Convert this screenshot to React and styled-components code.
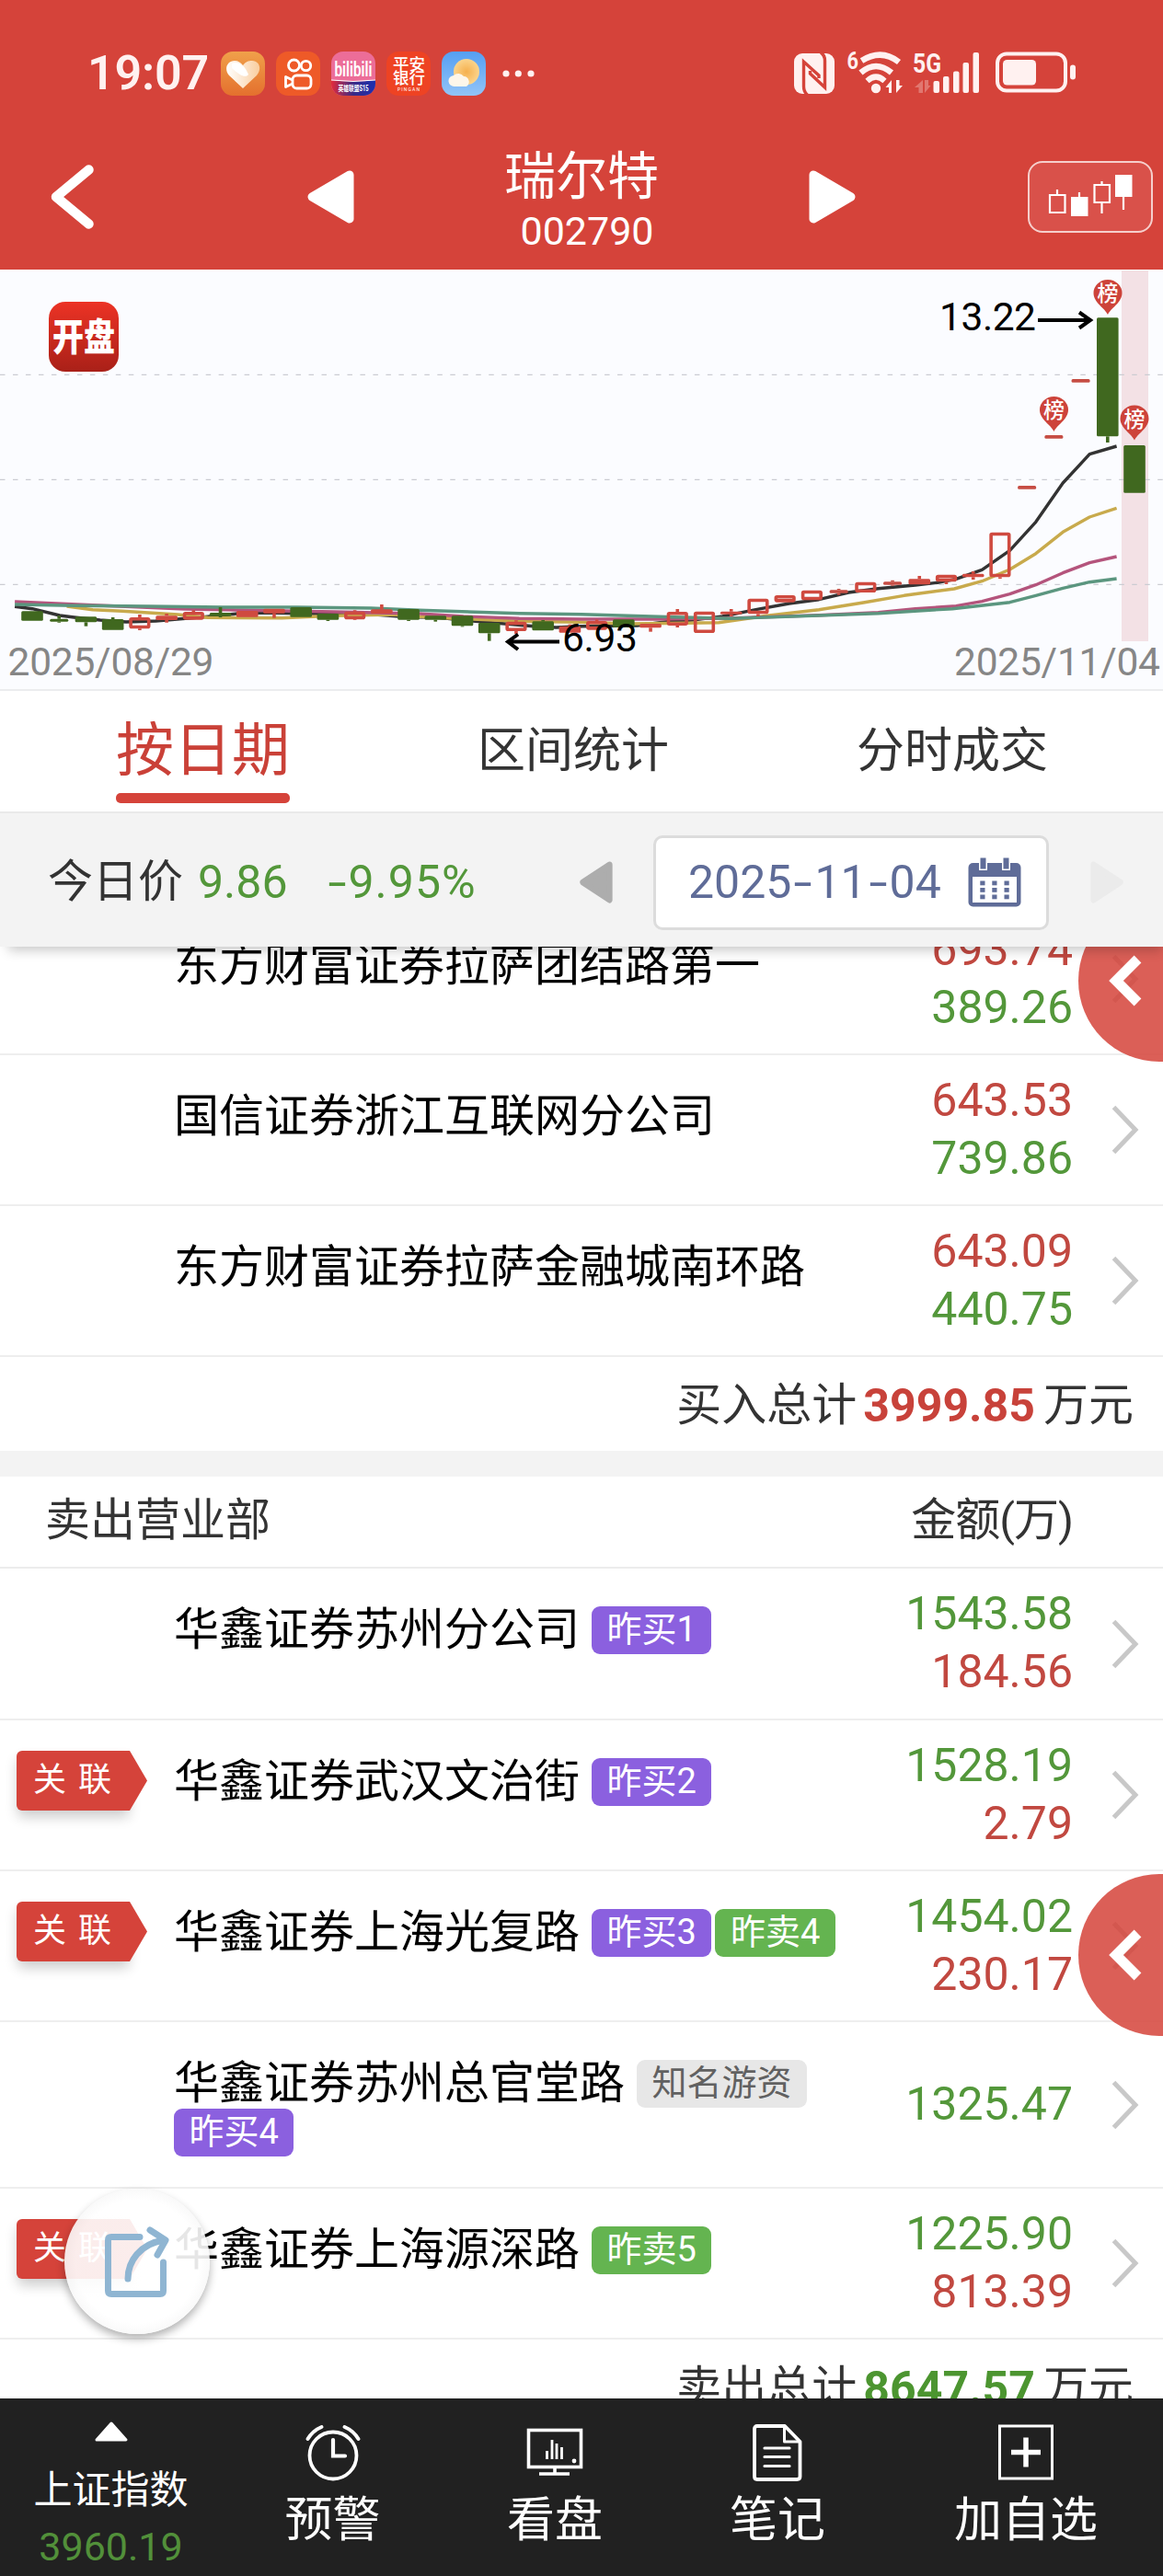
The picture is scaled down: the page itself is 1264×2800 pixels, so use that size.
import React from "react";
import styled, { createGlobalStyle, css } from "styled-components";

const Global = createGlobalStyle`
  * { box-sizing: border-box; }
  body {
    margin: 0;
    background: #fff;
    font-family: Roboto, "Noto Sans CJK SC", sans-serif;
    color: #333;
    -webkit-font-smoothing: antialiased;
  }
  svg { display: block; flex: none; overflow: visible; }
`;

const RED = "#d5433a";
const GREEN = "#53973a";

const Screen = styled.div`
  width: 1264px;
  height: 2800px;
  display: flex;
  flex-direction: column;
  overflow: hidden;
  background: #fff;
`;

/* ---------- header ---------- */

const Header = styled.header`
  height: 293px;
  flex: none;
  background: ${RED};
  color: #fff;
`;

const StatusBar = styled.div`
  height: 135px;
  padding: 56px 94px 0 95px;
  display: flex;
  align-items: flex-start;
  justify-content: space-between;
`;

const StatusGroup = styled.div`
  display: flex;
  align-items: center;
  height: 48px;
  gap: 12px;
`;

const Clock = styled.span`
  width: 133px;
  font-size: 52px;
  line-height: 62px;
  font-weight: 600;
  letter-spacing: -0.2px;
  white-space: nowrap;
  color: #fff1f0;
`;

const TitleBar = styled.div`
  height: 158px;
  display: grid;
  grid-template-columns: 334px 51px 494px 51px 1fr;
  align-items: center;
`;

const BackSlot = styled.div`
  padding-left: 55px;
`;

const ModeSlot = styled.div`
  display: flex;
  justify-content: flex-end;
  padding-right: 11px;
`;

const Title = styled.div`
  display: flex;
  flex-direction: column;
  align-items: center;
  padding-top: 14px;
`;

const StockName = styled.div`
  font-size: 56px;
  line-height: 60px;
`;

const StockCode = styled.div`
  font-size: 43px;
  line-height: 59px;
  padding-left: 12px;
`;

const ModeButton = styled.div`
  width: 136px;
  height: 78px;
  border: 2px solid #f6cfcc;
  border-radius: 16px;
  background: #d9514a;
  display: flex;
  align-items: center;
  justify-content: center;
`;

/* ---------- chart ---------- */

const ChartPanel = styled.section`
  height: 458px;
  flex: none;
  background: #fbfcff;
  border-bottom: 2px solid #ebecee;
  position: relative;
`;

const OpenBadge = styled.div`
  position: absolute;
  left: 53px;
  top: 35px;
  width: 76px;
  height: 76px;
  border-radius: 18px;
  background: linear-gradient(#ec3325, #a92018);
  color: #fff;
  font-size: 34px;
  font-weight: 900;
  line-height: 76px;
  text-align: center;
  white-space: nowrap;

  span {
    display: block;
    transform: scaleY(1.22);
  }
`;

/* ---------- tabs and date ---------- */

const Tabs = styled.nav`
  height: 133px;
  flex: none;
  padding: 0 125px 0 126px;
  display: flex;
  justify-content: space-between;
  border-bottom: 2px solid #e9e9e9;
`;

const Tab = styled.div`
  font-size: 52px;
  line-height: 132px;
  color: #333;

  ${(p) =>
    p.$active &&
    css`
      display: flex;
      flex-direction: column;
      height: 122px;
      font-size: 63px;
      line-height: 130px;
      color: #ca4138;

      &::after {
        content: "";
        height: 11px;
        margin-top: -19px;
        border-radius: 5px;
        background: ${RED};
      }
    `}
`;

const DateBar = styled.div`
  height: 145px;
  flex: none;
  background: #f3f3f3;
  display: grid;
  grid-template-columns: 630px 80px 430px 45px 1fr;
  align-items: center;
  padding-top: 5px;
  position: relative;
  z-index: 2;
  box-shadow: 4px 9px 12px -5px rgba(0, 0, 0, 0.22);
`;

const Today = styled.div`
  padding-left: 52px;
  display: flex;
  align-items: center;
  font-size: 50px;
  line-height: 60px;
  color: ${GREEN};
`;

const TodayLabel = styled.span`
  width: 163px;
  font-size: 49px;
  color: #333;
`;

const Change = styled.span`
  margin-left: 41px;
  letter-spacing: 1px;
`;

const Dash = styled.span`
  display: inline-block;
  width: 25px;
  letter-spacing: 0;
  text-align: center;
  transform: scaleX(1.45);
`;

const DateBox = styled.div`
  width: 430px;
  height: 103px;
  border: 3px solid #dcdcdc;
  border-radius: 10px;
  background: #fff;
  display: flex;
  align-items: center;
  justify-content: space-between;
  padding: 0 27px 0 35px;
  font-size: 50px;
  line-height: 60px;
  color: #5f6c98;
  white-space: nowrap;
`;

/* ---------- lists ---------- */

const Lists = styled.main`
  height: 1578px;
  flex: none;
  overflow: hidden;
  position: relative;
`;

const Scrolled = styled.div`
  margin-top: -46px;
`;

const Row = styled.div`
  height: ${(p) => p.$h}px;
  border-bottom: 2px solid #eeeeee;
  display: grid;
  grid-template-columns: 189px 1fr 216px 78px;
`;

const LinkSlot = styled.div`
  padding: 33px 0 0 18px;
`;

const LinkTag = styled.div`
  position: relative;
  width: 123px;
  height: 65px;
  border-radius: 6px 0 0 6px;
  background: ${RED};
  color: #fff;
  font-size: 36px;
  line-height: 65px;
  letter-spacing: 13px;
  padding-left: 18px;
  white-space: nowrap;
  box-shadow: 0 8px 14px -1px rgba(0, 0, 0, 0.2);

  &::after {
    content: "";
    position: absolute;
    left: 122px;
    top: 0;
    width: 20px;
    height: 65px;
    background: ${RED};
    clip-path: polygon(0 0, 5% 0, 100% 50%, 5% 100%, 0 100%);
  }
`;

const Branch = styled.div`
  padding-top: 40px;
  display: flex;
  flex-wrap: wrap;
  align-content: flex-start;
`;

const BranchName = styled.span`
  height: 53px;
  line-height: 53px;
  font-size: 49px;
  color: #000;
  margin-right: 13px;
`;

const tones = {
  buy: css`
    background: #8b60df;
    color: #fff;
  `,
  sell: css`
    background: #64b450;
    color: #fff;
  `,
  fame: css`
    background: #e7e7e7;
    color: #616161;
  `,
};

const Tag = styled.span`
  height: 52px;
  margin: 1px 4px 0 0;
  padding: 0 16.500px;
  border-radius: 9px;
  font-size: 38px;
  line-height: 50px;
  ${(p) => tones[p.$tone]}
`;

const Amounts = styled.div`
  display: flex;
  flex-direction: column;
  justify-content: center;
  padding-bottom: 1px;
  text-align: right;
  font-size: 50px;
  line-height: 63px;
`;

const Amount = styled.span`
  padding-right: 20px;
  color: ${(p) => (p.$tone === "red" ? "#c14840" : GREEN)};
`;

const ArrowSlot = styled.div`
  display: flex;
  align-items: center;
  padding-left: 22px;
`;

const TotalRow = styled.div`
  height: 102px;
  padding: 4px 32px 0 0;
  display: flex;
  justify-content: flex-end;
  align-items: center;
  font-size: 49px;
  line-height: 60px;
`;

const TotalValue = styled.b`
  font-size: 50px;
  margin: 0 9px 0 7px;
  color: ${(p) => (p.$tone === "red" ? "#c8423a" : "#4c9530")};
`;

const Band = styled.div`
  height: 28px;
  background: #f3f3f3;
`;

const SectionHead = styled.div`
  height: 100px;
  border-bottom: 2px solid #ececec;
  padding: 0 98px 2px 49px;
  display: flex;
  justify-content: space-between;
  align-items: center;
  font-size: 49px;
  line-height: 60px;
`;

const AmountHead = styled.span`
  letter-spacing: -1px;
`;

const Handle = styled.div`
  position: absolute;
  right: -84px;
  top: ${(p) => p.$top}px;
  width: 176px;
  height: 176px;
  border-radius: 50%;
  background: rgba(213, 67, 58, 0.85);
  display: flex;
  align-items: center;
  padding-left: 32px;
`;

const ShareButton = styled.div`
  position: absolute;
  left: 70px;
  top: 1350px;
  width: 158px;
  height: 158px;
  border-radius: 50%;
  background: radial-gradient(rgba(255, 255, 255, 0.9) 60%, rgba(249, 249, 249, 0.9) 70%);
  box-shadow: 0 5px 10px rgba(0, 0, 0, 0.3);
  padding: 41px 0 0 41px;
`;

/* ---------- bottom bar ---------- */

const BottomBar = styled.footer`
  height: 193px;
  flex: none;
  background: #212121;
  display: grid;
  grid-template-columns: 241px 241px 242px 242px 298px;
  color: #fff;
`;

const NavItem = styled.div`
  display: flex;
  flex-direction: column;
  align-items: center;
  padding-top: 28px;
  font-size: 52px;
`;

const NavLabel = styled.span`
  line-height: 60px;
  margin-top: 13px;
`;

const IndexItem = styled(NavItem)`
  padding-top: 25px;
  font-size: 42px;
`;

const IndexName = styled.span`
  line-height: 60px;
  margin-top: 23px;
`;

const IndexValue = styled.span`
  font-size: 43px;
  line-height: 60px;
  margin-top: 1px;
  color: #52903a;
`;

/* ---------- icons ---------- */

const HeartApp = () => (
  <svg width="48" height="48" viewBox="0 0 48 48">
    <defs>
      <linearGradient id="hb" x2="0" y2="1">
        <stop stopColor="#f0a04a" />
        <stop offset="1" stopColor="#e4702e" />
      </linearGradient>
      <linearGradient id="hf" x1="0" x2="1">
        <stop stopColor="#fff" />
        <stop offset="1" stopColor="#f9cd9e" />
      </linearGradient>
    </defs>
    <rect width="48" height="48" rx="13" fill="url(#hb)" />
    <path d="M24 40 L9 26 C3 19 7 10 15 10 C19 10 22 12 24 15 C27 11 30 10 34 10 C42 10 45 19 39 26 Z" fill="url(#hf)" />
    <path d="M12 13 C20 9 27 17 30 25 C26 30 19 24 12 18 Z" fill="#fff" />
  </svg>
);

const KuaiApp = () => (
  <svg width="48" height="48" viewBox="0 0 48 48">
    <rect width="48" height="48" rx="13" fill="#ee5a28" />
    <g fill="none" stroke="#fff" strokeWidth="2.800">
      <circle cx="19.500" cy="15" r="6" />
      <circle cx="32.500" cy="15.500" r="5.200" />
      <rect x="18" y="26" width="20" height="14" rx="4.500" />
      <path d="M18 31 L10.500 27.500 V38.500 L18 35" strokeLinejoin="round" />
    </g>
  </svg>
);

const BiliApp = () => (
  <svg width="48" height="48" viewBox="0 0 48 48">
    <defs>
      <clipPath id="bc">
        <rect width="48" height="48" rx="13" />
      </clipPath>
      <linearGradient id="bl">
        <stop stopColor="#e32a3a" />
        <stop offset="0.5" stopColor="#3a2a86" />
        <stop offset="1" stopColor="#1c2fb0" />
      </linearGradient>
    </defs>
    <g clipPath="url(#bc)">
      <rect width="48" height="48" fill="#ec6d98" />
      <path d="M0 31 Q24 34 48 31 V48 H0 Z" fill="url(#bl)" />
      <path d="M0 31 Q24 34 48 31" stroke="#fff" strokeWidth="1" fill="none" />
    </g>
    <text x="24" y="27" fontSize="22" fontWeight="600" fill="#fff" textAnchor="middle" textLength="41" lengthAdjust="spacingAndGlyphs">
      bilibili
    </text>
    <text x="24" y="42.500" fontSize="8.500" fontWeight="700" fill="#fff" textAnchor="middle" textLength="33" lengthAdjust="spacingAndGlyphs">
      英雄联盟S15
    </text>
  </svg>
);

const BankApp = () => (
  <svg width="48" height="48" viewBox="0 0 48 48">
    <rect width="48" height="48" rx="13" fill="#ee4323" />
    <g fill="#fff" textAnchor="middle">
      <text x="24.500" y="20" fontSize="17.500" fontWeight="500">平安</text>
      <text x="24.500" y="35" fontSize="17.500" fontWeight="500">银行</text>
      <text x="24" y="42.500" fontSize="5" textLength="24">PINGAN</text>
    </g>
  </svg>
);

const WeatherApp = () => (
  <svg width="48" height="48" viewBox="0 0 48 48">
    <defs>
      <linearGradient id="wb" x2="0" y2="1">
        <stop stopColor="#559ff3" />
        <stop offset="1" stopColor="#92c4f7" />
      </linearGradient>
      <radialGradient id="ws">
        <stop stopColor="#f5b04e" />
        <stop offset="1" stopColor="#fbd48c" />
      </radialGradient>
    </defs>
    <rect width="48" height="48" rx="13" fill="url(#wb)" />
    <circle cx="27" cy="22" r="14" fill="url(#ws)" />
    <path d="M14 38 a6 6 0 0 1 -1 -12 a7.500 7.500 0 0 1 11 1 a6 6 0 0 1 3 11 Z" fill="#fdf6ea" />
  </svg>
);

const DotsSlot = styled.span`
  padding-left: 6px;
`;

const MoreDots = () => (
  <svg width="36" height="10" viewBox="0 0 36 10">
    <g fill="#fff1f0">
      <circle cx="4" cy="5" r="3.600" />
      <circle cx="17.300" cy="5" r="3.600" />
      <circle cx="31" cy="5" r="3.600" />
    </g>
  </svg>
);

const StatusIcons = () => (
  <svg width="308" height="48" viewBox="863 56 308 48">
    <rect x="864" y="58" width="44" height="44" rx="9" fill="#fff1f0" />
    <g fill="none" stroke={RED} strokeWidth="3.400">
      <path d="M878.500 103 Q874.500 100 874.500 94 V67 L891 82 V85" />
      <path d="M893 57 Q897.500 60 897.500 66 V95 L881.500 80 V77" />
    </g>
    <g fill="#fff1f0">
      <text x="921.500" y="74.500" fontSize="26" fontWeight="700" textLength="12.500" lengthAdjust="spacingAndGlyphs">6</text>
      <text x="993" y="78.500" fontSize="30" fontWeight="700" textLength="31" lengthAdjust="spacingAndGlyphs">5G</text>
      <circle cx="953" cy="96" r="5.200" />
      <rect x="1015.500" y="88" width="6.500" height="13" rx="2" />
      <rect x="1026" y="83" width="6.500" height="18" rx="2" />
      <rect x="1037" y="77.500" width="6.500" height="23.500" rx="2" />
      <rect x="1047.500" y="68" width="6.500" height="33" rx="2" />
      <rect x="1058.500" y="57" width="6.500" height="44" rx="2" />
      <path d="M970 101 V87 L963.500 95 H967 V101 Z" />
      <path d="M975 87 V101 L982 93 H978.500 V87 Z" />
      <path d="M1004 101 V87 L995 95 H999.500 V101 Z" opacity="0.300" />
      <path d="M1006 87 V101 L1012.500 93 H1010 V87 Z" opacity="0.300" />
      <rect x="1091" y="65" width="36" height="27.500" rx="4.500" />
      <rect x="1164" y="70.500" width="6" height="16" rx="3" />
    </g>
    <g fill="none" stroke="#fff1f0">
      <path d="M937.500 66 Q959 52.500 978 67.500" strokeWidth="6.500" />
      <path d="M936.500 79 Q953 65 970 79" strokeWidth="6.500" />
      <path d="M943.500 88 Q953 79 962.500 88" strokeWidth="6" />
      <rect x="1085" y="58.500" width="74" height="40" rx="10" strokeWidth="4" />
    </g>
  </svg>
);

const BackIcon = () => (
  <svg width="50" height="72" viewBox="0 0 50 72">
    <path d="M42 6.500 L6.500 36 L42 65.500" transform="translate(-0.500 0)" fill="none" stroke="#fff" strokeWidth="10.500" strokeLinecap="round" strokeLinejoin="round" />
  </svg>
);

const PlayIcon = ({ w, h, color, flip }) => (
  <svg width={w} height={h} viewBox="0 0 51 58" preserveAspectRatio="none">
    <path
      d="M46 5 L5 29 L46 53 Z"
      transform={flip ? "translate(51 0) scale(-1 1)" : undefined}
      fill={color}
      stroke={color}
      strokeWidth="9"
      strokeLinejoin="round"
    />
  </svg>
);

const CandlesIcon = () => (
  <svg width="92" height="50" viewBox="1139 190 92 50">
    <g fill="none" stroke="#fff" strokeWidth="2.200">
      <path d="M1141 213 H1157.500 V232 H1141 Z M1149 212 V207" />
      <path d="M1173 216 V210" />
      <path d="M1189.500 202 H1206 V221 H1189.500 Z M1197.500 201 V198 M1197.500 222 V233" />
      <path d="M1221 214 V229" />
    </g>
    <rect x="1164" y="215" width="18.500" height="21" fill="#fff" />
    <rect x="1212" y="191" width="18.500" height="24" fill="#fff" />
  </svg>
);

const CalendarIcon = () => (
  <svg width="58" height="54" viewBox="0 0 58 54">
    <rect x="0.500" y="6" width="57" height="47.500" rx="5" fill="#5f6c98" />
    <rect x="5" y="21" width="48" height="28" fill="#fff" />
    <path d="M12 5.500 H21 V14 H12 Z M37 5.500 H46 V14 H37 Z" fill="#fff" />
    <path d="M13.500 0.500 H19.500 V12.500 H13.500 Z M38.500 0.500 H44.500 V12.500 H38.500 Z" fill="#5f6c98" />
    {[25.500, 33, 40.500].map((y) =>
      [13.300, 26.300, 39.500].map((x) => <rect key={`${x}-${y}`} x={x} y={y} width="5.200" height="4.800" fill="#5f6c98" />)
    )}
  </svg>
);

const ChevronIcon = () => (
  <svg width="30" height="54" viewBox="0 0 30 54">
    <path d="M2.500 2.500 L26 27 L2.500 51.500" fill="none" stroke="#c8c8c8" strokeWidth="5" />
  </svg>
);

const HandleIcon = () => (
  <svg width="38" height="56" viewBox="0 0 38 56">
    <path d="M32.500 4.500 L9 28 L32.500 51.500" fill="none" stroke="#fff" strokeWidth="11" />
  </svg>
);

const ShareIcon = () => (
  <svg width="74" height="78" viewBox="0 0 74 78">
    <g fill="none" stroke="#8fb5d2" strokeWidth="7" strokeLinecap="round" strokeLinejoin="round">
      <path d="M41 11.500 H10 Q6.500 11.500 6.500 15 V70 Q6.500 73.500 10 73.500 H63 Q66.500 73.500 66.500 70 V39" />
      <path d="M28 57 C28 38 41 19 67 15" />
      <path d="M52 4 L69 15 L60 31" />
    </g>
  </svg>
);

const AlarmIcon = () => (
  <svg width="60" height="62" viewBox="0 0 60 62">
    <g fill="none" stroke="#fff" strokeLinecap="round">
      <circle cx="30" cy="34" r="25.500" strokeWidth="3.800" />
      <path d="M30 17 V34.500 H43" strokeWidth="4.200" />
      <path d="M2.500 16 Q8 7 17.500 3 M42.500 3 Q52 7 57.500 16" strokeWidth="4" />
    </g>
  </svg>
);

const MonitorIcon = () => (
  <svg width="62" height="62" viewBox="0 0 62 62">
    <rect x="2.500" y="6.500" width="57" height="40" fill="none" stroke="#fff" strokeWidth="3.600" />
    <path d="M14 54 H47 M31 46 V54" stroke="#fff" strokeWidth="3.600" />
    <path d="M22.500 29 V38 M28 17 V38 M33 21 V38 M38.500 25 V38" stroke="#fff" strokeWidth="2.800" />
    <circle cx="52" cy="40" r="2.400" fill="#fff" />
  </svg>
);

const NoteIcon = () => (
  <svg width="56" height="62" viewBox="0 0 56 62">
    <g fill="none" stroke="#fff" strokeWidth="3.800" strokeLinejoin="round" strokeLinecap="round">
      <path d="M36 2 H6 Q3 2 3 5 V57 Q3 60 6 60 H49 Q52.500 60 52.500 57 V19 Z" />
      <path d="M35.500 3 V19 H51" strokeWidth="3" />
      <path d="M14 26 H41 M14 35.500 H41 M14 45.500 H41" strokeWidth="3.200" />
    </g>
  </svg>
);

const PlusIcon = () => (
  <svg width="62" height="62" viewBox="0 0 62 62">
    <rect x="2.500" y="2" width="57" height="57" fill="none" stroke="#fff" strokeWidth="3" />
    <path d="M15 30.500 H47 M31 14.500 V46.500" stroke="#fff" strokeWidth="5.500" />
  </svg>
);

/* ---------- candlestick chart ---------- */

const X = (u) => u / 2.481;
const Y = (v) => v / 3 - 3;
const STEP = 29.22;

// kind, body top, body bottom, wick top, wick bottom
const candles = [
  ["g", 1123, 1154], ["gt", 1148, 1157, 1138, 1160], ["g", 1141, 1159, 1141, 1172], ["g", 1149, 1184, 1143, 1184],
  ["h", 1143, 1180, 1134, 1185], ["r", 1138, 1152, 1131, 1160], ["h", 1125, 1151, 1120, 1151], ["g", 1128, 1139, 1110, 1143],
  ["r", 1122, 1142], ["r", 1115, 1130, 1115, 1145], ["g", 1110, 1142], ["g", 1131, 1151, 1131, 1155],
  ["h", 1124, 1150, 1120, 1152], ["r", 1117, 1131, 1101, 1131], ["g", 1116, 1151, 1116, 1155], ["g", 1138, 1151, 1138, 1157],
  ["g", 1138, 1171, 1138, 1174], ["g", 1161, 1195, 1161, 1220], ["h", 1157, 1188, 1153, 1197], ["g", 1156, 1186, 1152, 1186],
  ["r", 1172, 1193, 1166, 1193], ["h", 1155, 1184, 1150, 1184], ["g", 1150, 1175], ["r", 1164, 1177, 1164, 1190],
  ["h", 1125, 1170, 1116, 1176], ["h", 1124, 1194], ["r", 1124, 1133, 1116, 1140], ["h", 1082, 1132, 1082, 1140],
  ["h", 1071, 1094], ["h", 1055, 1087], ["rt", 1054, 1064, 1050, 1070], ["h", 1028, 1062],
  ["rt", 1027, 1037, 1022, 1040], ["r", 1018, 1036, 1008, 1036], ["h", 1004, 1027, 1004, 1035], ["r", 1001, 1012, 993, 1020],
  ["h", 866, 1012, 866, 1017], ["rt", 714, 725], ["rt", 549, 560], ["rt", 366, 377],
  ["g", 166, 553, 166, 573], ["g", 582, 737],
];

const averages = [
  ["#5b967f", "40,1101 200,1105 400,1107 600,1110 800,1110 1000,1113 1130,1120 1400,1130 1568,1133 1818,1142 1968,1147 2118,1141 2368,1130 2568,1115 2723,1094 2793,1072 2866,1048 2938,1028 3011,1017"],
  ["#b4547c", "40,1092 250,1103 500,1116 900,1125 1130,1131 1250,1140 1400,1147 1568,1149 1768,1149 1968,1146 2208,1136 2368,1127 2468,1115 2578,1106 2648,1091 2723,1067 2793,1037 2866,998 2938,965 3011,945"],
  ["#c8aa4c", "180,1107 250,1118 330,1123 480,1134 560,1144 760,1145 900,1138 1060,1134 1130,1141 1250,1148 1400,1156 1568,1159 1698,1164 1938,1160 2068,1138 2208,1118 2328,1095 2438,1072 2573,1050 2648,1025 2723,987 2793,935 2866,865 2938,816 3011,787"],
  ["#333", "40,1108 87,1115 161,1137 200,1143 270,1152 340,1158 420,1155 500,1147 560,1141 640,1131 720,1128 800,1130 880,1132 960,1128 1020,1135 1100,1142 1180,1143 1250,1153 1340,1162 1440,1172 1500,1176 1568,1172 1718,1170 1798,1157 1868,1152 1948,1140 2038,1118 2128,1098 2208,1085 2288,1062 2368,1049 2468,1038 2528,1030 2578,1018 2648,988 2723,925 2793,832 2866,705 2938,611 3011,585"],
];

const Candle = ({ index, data }) => {
  const [kind, top, bottom, high = top, low = bottom] = data;
  const x = 35 + index * STEP;
  const green = kind[0] === "g";
  const color = green ? "#40681f" : kind[1] === "t" ? "#c64d44" : "#cf4a40";
  const half = kind[1] === "t" ? 10 : 11.8;
  const y1 = Y(top);
  const y2 = Y(bottom);
  return (
    <g stroke={color} fill={color}>
      <path d={`M${x} ${Y(high)} V${y1} M${x} ${y2} V${Y(low)}`} strokeWidth="3.600" />
      {kind === "h" ? (
        <rect x={x - 9.8} y={y1 + 1.8} width="19.600" height={Math.max(y2 - y1 - 3.6, 2)} rx="1" fill="none" strokeWidth="3.600" />
      ) : (
        <rect x={x - half} y={y1} width={half * 2} height={y2 - y1} rx="1.500" stroke="none" />
      )}
    </g>
  );
};

const Pin = ({ x, y }) => (
  <g transform={`translate(${x} ${y})`}>
    <path d="M0 38 C-3 31 -15.500 25 -15.500 14.500 A15.500 14.500 0 0 1 15.500 14.500 C15.500 25 3 31 0 38 Z" fill="#cd433a" />
    <text x="0" y="23" fontSize="23" fontWeight="500" fill="#fff" textAnchor="middle">榜</text>
  </g>
);

const points = (list) =>
  list
    .split(" ")
    .map((pair) => {
      const [u, v] = pair.split(",").map(Number);
      return `${X(u).toFixed(1)},${Y(v).toFixed(1)}`;
    })
    .join(" ");

const KLine = () => (
  <svg width="1264" height="456" viewBox="0 0 1264 456">
    <rect x="1219" y="1" width="29" height="403" fill="#f3e1e5" />
    {[114.3, 228.3, 342.3].map((y) => (
      <path key={y} d={`M0 ${y} H1264`} stroke="#cbccd2" strokeWidth="1.200" strokeDasharray="5.500 8.480" />
    ))}
    {averages
      .slice()
      .reverse()
      .map(([color, list]) => (
        <polyline key={color} points={points(list)} fill="none" stroke={color} strokeWidth="3.400" strokeLinejoin="round" />
      ))}
    {candles.map((data, i) => (
      <Candle key={i} index={i} data={data} />
    ))}
    <Pin x={1204} y={11} />
    <Pin x={1145.5} y={138} />
    <Pin x={1233} y={147.5} />
    <g fill="#000" fontSize="42.500">
      <text x="1126" y="65.500" textAnchor="end" textLength="105">13.22</text>
      <text x="611" y="414.500" textLength="82">6.93</text>
    </g>
    <g fill="none" stroke="#000" strokeWidth="4">
      <path d="M1128 55 H1184 M1173 46.500 L1185 55 L1173 63.500" />
      <path d="M608 404.500 H553 M563 396.500 L552 404.500 L563 413" />
    </g>
    <g fill="#868686" fontSize="42.500">
      <text x="8.500" y="441" textLength="224">2025/08/29</text>
      <text x="1037" y="441" textLength="224">2025/11/04</text>
    </g>
  </svg>
);

/* ---------- data ---------- */

const buyers = [
  { name: "东方财富证券拉萨团结路第一", up: "693.74", down: "389.26", h: 164 },
  { name: "国信证券浙江互联网分公司", up: "643.53", down: "739.86", h: 164 },
  { name: "东方财富证券拉萨金融城南环路", up: "643.09", down: "440.75", h: 164 },
];

const sellers = [
  { name: "华鑫证券苏州分公司", tags: [["buy", "昨买1"]], down: "1543.58", up: "184.56", h: 165 },
  { name: "华鑫证券武汉文治街", tags: [["buy", "昨买2"]], down: "1528.19", up: "2.79", h: 164, linked: true },
  { name: "华鑫证券上海光复路", tags: [["buy", "昨买3"], ["sell", "昨卖4"]], down: "1454.02", up: "230.17", h: 164, linked: true },
  { name: "华鑫证券苏州总官堂路", tags: [["fame", "知名游资"], ["buy", "昨买4"]], down: "1325.47", h: 181 },
  { name: "华鑫证券上海源深路", tags: [["sell", "昨卖5"]], down: "1225.90", up: "813.39", h: 164, linked: true },
];

const BranchRow = ({ item, selling }) => {
  const up = item.up && (
    <Amount key="up" $tone="red">
      {item.up}
    </Amount>
  );
  const down = (
    <Amount key="down" $tone="green">
      {item.down}
    </Amount>
  );
  return (
    <Row $h={item.h}>
      <LinkSlot>{item.linked && <LinkTag>关联</LinkTag>}</LinkSlot>
      <Branch>
        <BranchName>{item.name}</BranchName>
        {(item.tags || []).map(([tone, label]) => (
          <Tag key={label} $tone={tone}>
            {label}
          </Tag>
        ))}
      </Branch>
      <Amounts>{selling ? [down, up] : [up, down]}</Amounts>
      <ArrowSlot>
        <ChevronIcon />
      </ArrowSlot>
    </Row>
  );
};

export default function App() {
  return (
    <Screen>
      <Global />
      <Header>
        <StatusBar>
          <StatusGroup>
            <Clock>19:07</Clock>
            <HeartApp />
            <KuaiApp />
            <BiliApp />
            <BankApp />
            <WeatherApp />
            <DotsSlot>
              <MoreDots />
            </DotsSlot>
          </StatusGroup>
          <StatusIcons />
        </StatusBar>
        <TitleBar>
          <BackSlot>
            <BackIcon />
          </BackSlot>
          <PlayIcon w={51} h={58} color="#fff" />
          <Title>
            <StockName>瑞尔特</StockName>
            <StockCode>002790</StockCode>
          </Title>
          <PlayIcon w={51} h={58} color="#fff" flip />
          <ModeSlot>
            <ModeButton>
              <CandlesIcon />
            </ModeButton>
          </ModeSlot>
        </TitleBar>
      </Header>

      <ChartPanel>
        <KLine />
        <OpenBadge>
          <span>开盘</span>
        </OpenBadge>
      </ChartPanel>

      <Tabs>
        <Tab $active>按日期</Tab>
        <Tab>区间统计</Tab>
        <Tab>分时成交</Tab>
      </Tabs>

      <DateBar>
        <Today>
          <TodayLabel>今日价</TodayLabel>
          <span>9.86</span>
          <Change>
            <Dash>-</Dash>9.95%
          </Change>
        </Today>
        <PlayIcon w={36} h={46} color="#adadad" />
        <DateBox>
          <span>
            2025<Dash>-</Dash>11<Dash>-</Dash>04
          </span>
          <CalendarIcon />
        </DateBox>
        <span />
        <PlayIcon w={36} h={46} color="#ebebeb" flip />
      </DateBar>

      <Lists>
        <Scrolled>
          {buyers.map((item) => (
            <BranchRow key={item.name} item={item} />
          ))}
          <TotalRow>
            买入总计<TotalValue $tone="red">3999.85</TotalValue>万元
          </TotalRow>
          <Band />
          <SectionHead>
            <span>卖出营业部</span>
            <AmountHead>金额(万)</AmountHead>
          </SectionHead>
          {sellers.map((item) => (
            <BranchRow key={item.name} item={item} selling />
          ))}
          <TotalRow>
            卖出总计<TotalValue $tone="green">8647.57</TotalValue>万元
          </TotalRow>
        </Scrolled>
        <Handle $top={-51}>
          <HandleIcon />
        </Handle>
        <Handle $top={1008}>
          <HandleIcon />
        </Handle>
        <ShareButton>
          <ShareIcon />
        </ShareButton>
      </Lists>

      <BottomBar>
        <IndexItem>
          <svg width="36" height="22" viewBox="0 0 36 22">
            <path d="M18 2 L34 20 H2 Z" fill="#fff" stroke="#fff" strokeWidth="3" strokeLinejoin="round" />
          </svg>
          <IndexName>上证指数</IndexName>
          <IndexValue>3960.19</IndexValue>
        </IndexItem>
        <NavItem>
          <AlarmIcon />
          <NavLabel>预警</NavLabel>
        </NavItem>
        <NavItem>
          <MonitorIcon />
          <NavLabel>看盘</NavLabel>
        </NavItem>
        <NavItem>
          <NoteIcon />
          <NavLabel>笔记</NavLabel>
        </NavItem>
        <NavItem>
          <PlusIcon />
          <NavLabel>加自选</NavLabel>
        </NavItem>
      </BottomBar>
    </Screen>
  );
}
